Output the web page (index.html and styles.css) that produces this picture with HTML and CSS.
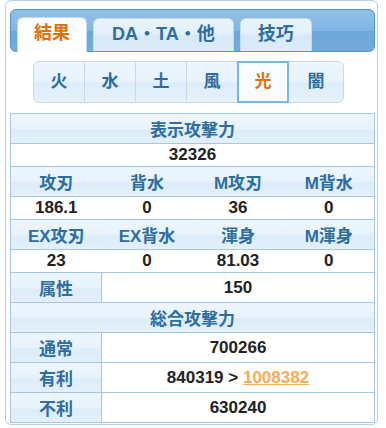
FILE: index.html
```html
<!DOCTYPE html>
<html lang="ja">
<head>
    <meta charset="UTF-8">
    <meta name="viewport" content="width=device-width, initial-scale=1.0">
    <title>結果</title>
    <link rel="stylesheet" href="styles.css">
</head>
<body>
    <div class="tabs">
        <ul class="tab-nav">
            <li class="tab active">結果</li>
            <li class="tab">DA・TA・他</li>
            <li class="tab">技巧</li>
        </ul>
        <div class="panel">
            <div class="elements">
                <span class="el">火</span>
                <span class="el">水</span>
                <span class="el">土</span>
                <span class="el">風</span>
                <span class="el active">光</span>
                <span class="el">闇</span>
            </div>
            <table class="result">
                <colgroup>
                    <col class="c"><col class="c"><col class="c"><col class="c">
                </colgroup>
                <tr><th colspan="4">表示攻撃力</th></tr>
                <tr><td colspan="4">32326</td></tr>
                <tr><th>攻刃</th><th>背水</th><th>M攻刃</th><th>M背水</th></tr>
                <tr><td>186.1</td><td>0</td><td>36</td><td>0</td></tr>
                <tr><th>EX攻刃</th><th>EX背水</th><th>渾身</th><th>M渾身</th></tr>
                <tr><td>23</td><td>0</td><td>81.03</td><td>0</td></tr>
                <tr><th class="side">属性</th><td colspan="3">150</td></tr>
                <tr><th colspan="4">総合攻撃力</th></tr>
                <tr><th class="side">通常</th><td colspan="3">700266</td></tr>
                <tr><th class="side">有利</th><td colspan="3">840319 &gt; <a href="#" class="best">1008382</a></td></tr>
                <tr><th class="side">不利</th><td colspan="3">630240</td></tr>
            </table>
        </div>
    </div>
</body>
</html>
```

FILE: styles.css
```css
body {
    margin: 0;
    font-family: "Liberation Sans", Arial, "Noto Sans CJK JP", sans-serif;
    font-weight: bold;
    background: #fff;
}
.tabs {
    box-sizing: border-box;
    width: 373px;
    margin-left: 5px;
    padding: 8px 2px 1px 4px;
    border: 1px solid #b4d2eb;
    border-radius: 6px;
    background: #fff;
}
.tab-nav {
    display: flex;
    align-items: flex-end;
    gap: 6px;
    height: 41px;
    margin: 0;
    padding: 0 6px;
    list-style: none;
    border: 1px solid #4b97d8;
    border-radius: 6px;
    background: linear-gradient(to bottom, #92c0e8 0%, #82b6e3 50%, #6ea8db 52%, #72aadc 100%);
}
.tab {
    box-sizing: border-box;
    height: 33px;
    padding: 0 18px;
    line-height: 31px;
    font-size: 18px;
    color: #2e6e9e;
    border: 1px solid #c5dbec;
    border-bottom: none;
    border-radius: 6px 6px 0 0;
    background: linear-gradient(to bottom, #eaf4fd 0%, #e2effb 50%, #d6e8f8 52%, #dcecfa 100%);
}
.tab:last-child {
    padding: 0 17px;
}
.tab.active {
    height: 35px;
    margin-bottom: -1px;
    padding: 0 16px;
    color: #e17009;
    background: #fbfdfe;
}
.panel {
    padding-top: 9px;
}
.elements {
    display: flex;
    margin-left: 23px;
}
.el {
    box-sizing: border-box;
    width: 52px;
    height: 42px;
    margin-left: -1px;
    line-height: 40px;
    text-align: center;
    font-size: 17px;
    color: #2e6e9e;
    border: 1px solid #c5dbec;
    background: linear-gradient(to bottom, #eef6fd 0%, #e7f2fc 50%, #dcecfa 52%, #e6f2fc 100%);
}
.el:first-child {
    margin-left: 0;
    border-radius: 6px 0 0 6px;
}
.el:last-child {
    width: 56px;
    border-radius: 0 6px 6px 0;
}
.el.active {
    position: relative;
    line-height: 38px;
    color: #e17009;
    border: 2px solid #79b7e7;
    background: #f9fcfe;
}
.result {
    width: 364px;
    margin-top: 10px;
    table-layout: fixed;
    border-collapse: collapse;
    border: 1px solid #a6c9e2;
    font-size: 17px;
}
.result .c {
    width: 91px;
}
.result th,
.result td {
    padding: 0;
    text-align: center;
    border-bottom: 1px solid #a6c9e2;
}
.result th {
    height: 29px;
    color: #2e6e9e;
    background: linear-gradient(to bottom, #eef6fd 0%, #e6f2fc 50%, #dcecfa 52%, #e4f0fb 100%);
}
.result td {
    height: 22px;
    color: #222;
    background: #fff;
}
.result th.side {
    border-right: 1px solid #a6c9e2;
}
.best {
    color: #f8ad55;
    text-decoration: underline;
}
```
